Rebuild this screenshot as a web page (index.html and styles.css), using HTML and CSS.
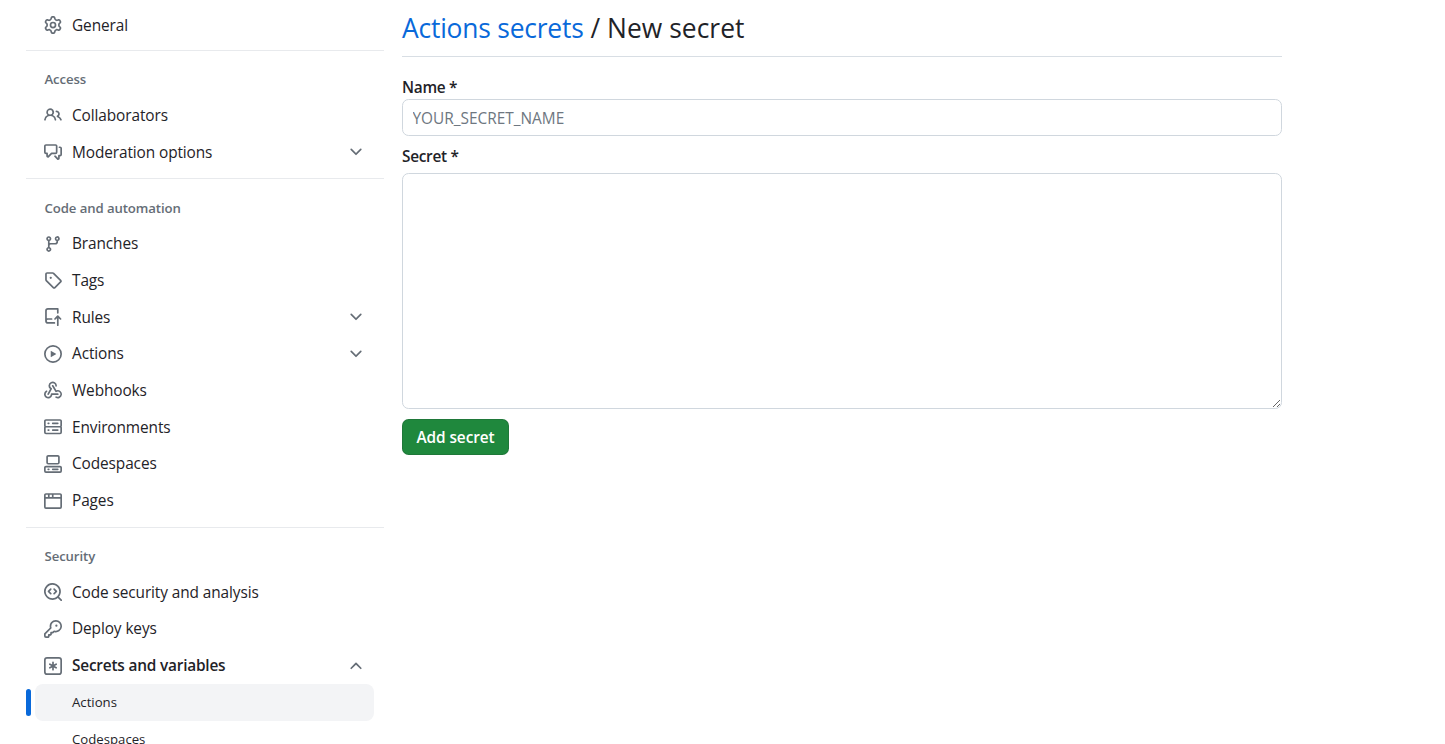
FILE: index.html
```html
<!DOCTYPE html>
<html lang="en">
<head>
  <meta charset="UTF-8" />
  <meta name="viewport" content="width=device-width, initial-scale=1.0" />
  <title>Add secret</title>
  <link rel="stylesheet" href="styles.css">
</head>
<body>
  <div class="layout">
    <nav class="sidebar">
      <a class="item"><svg class="icon" viewBox="0 0 16 16"><path d="M8 0a8.2 8.2 0 0 1 .701.031C9.444.095 9.99.645 10.16 1.29l.288 1.107c.018.066.079.158.212.224.231.114.454.243.668.386.123.082.233.09.299.071l1.103-.303c.644-.176 1.392.021 1.82.63.27.385.506.792.704 1.218.315.675.111 1.422-.364 1.891l-.814.806c-.049.048-.098.147-.088.294.016.257.016.515 0 .772-.01.147.038.246.088.294l.814.806c.475.469.679 1.216.364 1.891a7.977 7.977 0 0 1-.704 1.217c-.428.61-1.176.807-1.82.63l-1.102-.302c-.067-.019-.177-.011-.3.071a5.909 5.909 0 0 1-.668.386c-.133.066-.194.158-.211.224l-.29 1.106c-.168.646-.715 1.196-1.458 1.26a8.006 8.006 0 0 1-1.402 0c-.743-.064-1.289-.614-1.458-1.26l-.289-1.106c-.018-.066-.079-.158-.212-.224a5.738 5.738 0 0 1-.668-.386c-.123-.082-.233-.09-.299-.071l-1.103.303c-.644.176-1.392-.021-1.82-.63a8.12 8.12 0 0 1-.704-1.218c-.315-.675-.111-1.422.363-1.891l.815-.806c.05-.048.098-.147.088-.294a6.214 6.214 0 0 1 0-.772c.01-.147-.038-.246-.088-.294l-.815-.806C.635 6.045.431 5.298.746 4.623a7.92 7.92 0 0 1 .704-1.217c.428-.61 1.176-.807 1.82-.63l1.102.302c.067.019.177.011.3-.071.214-.143.437-.272.668-.386.133-.066.194-.158.211-.224l.29-1.106C6.009.645 6.556.095 7.299.03 7.53.01 7.764 0 8 0Zm-.571 1.525c-.036.003-.108.036-.137.146l-.289 1.105c-.147.561-.549.967-.998 1.189-.173.086-.34.183-.5.29-.417.278-.97.423-1.529.27l-1.103-.303c-.109-.03-.175.016-.195.045-.22.312-.412.644-.573.99-.014.031-.021.11.059.19l.815.806c.411.406.562.957.53 1.456a4.709 4.709 0 0 0 0 .582c.032.499-.119 1.05-.53 1.456l-.815.806c-.081.08-.073.159-.059.19.162.346.353.677.573.989.02.03.085.076.195.046l1.102-.303c.56-.153 1.113-.008 1.53.27.161.107.328.204.501.29.447.222.85.629.997 1.189l.289 1.105c.029.109.101.143.137.146a6.6 6.6 0 0 0 1.142 0c.036-.003.108-.036.137-.146l.289-1.105c.147-.561.549-.967.998-1.189.173-.086.34-.183.5-.29.417-.278.97-.423 1.529-.27l1.103.303c.109.029.175-.016.195-.045.22-.313.411-.644.573-.99.014-.031.021-.11-.059-.19l-.815-.806c-.411-.406-.562-.957-.53-1.456a4.709 4.709 0 0 0 0-.582c-.032-.499.119-1.05.53-1.456l.815-.806c.081-.08.073-.159.059-.19a6.464 6.464 0 0 0-.573-.989c-.02-.03-.085-.076-.195-.046l-1.102.303c-.56.153-1.113.008-1.53-.27a4.44 4.44 0 0 0-.501-.29c-.447-.222-.85-.629-.997-1.189l-.289-1.105c-.029-.11-.101-.143-.137-.146a6.6 6.6 0 0 0-1.142 0ZM11 8a3 3 0 1 1-6 0 3 3 0 0 1 6 0ZM9.5 8a1.5 1.5 0 1 0-3.001.001A1.5 1.5 0 0 0 9.5 8Z"/></svg>General</a>

      <div class="divider divider-first"></div>
      <h2 class="heading">Access</h2>
      <a class="item"><svg class="icon" viewBox="0 0 16 16"><path d="M2 5.5a3.5 3.5 0 1 1 5.898 2.549 5.508 5.508 0 0 1 3.034 4.084.75.75 0 1 1-1.482.235 4 4 0 0 0-7.9 0 .75.75 0 0 1-1.482-.236A5.507 5.507 0 0 1 3.102 8.05 3.493 3.493 0 0 1 2 5.5ZM11 4a3.001 3.001 0 0 1 2.22 5.018 5.01 5.01 0 0 1 2.56 3.012.749.749 0 0 1-.885.954.752.752 0 0 1-.549-.514 3.507 3.507 0 0 0-2.522-2.372.75.75 0 0 1-.574-.73v-.352a.75.75 0 0 1 .416-.672A1.5 1.5 0 0 0 11 5.5.75.75 0 0 1 11 4Zm-5.5-.5a2 2 0 1 0-.001 3.999A2 2 0 0 0 5.5 3.5Z"/></svg>Collaborators</a>
      <a class="item"><svg class="icon" viewBox="0 0 16 16"><path d="M1.75 1h8.5c.966 0 1.75.784 1.75 1.75v5.5A1.75 1.75 0 0 1 10.25 10H7.061l-2.574 2.573A1.458 1.458 0 0 1 2 11.543V10h-.25A1.75 1.75 0 0 1 0 8.25v-5.5C0 1.784.784 1 1.75 1ZM1.5 2.75v5.5c0 .138.112.25.25.25h1a.75.75 0 0 1 .75.75v2.19l2.72-2.72a.749.749 0 0 1 .53-.22h3.5a.25.25 0 0 0 .25-.25v-5.5a.25.25 0 0 0-.25-.25h-8.5a.25.25 0 0 0-.25.25Zm13 2a.25.25 0 0 0-.25-.25h-.5a.75.75 0 0 1 0-1.5h.5c.966 0 1.75.784 1.75 1.75v5.5A1.75 1.75 0 0 1 14.25 12H14v1.543a1.458 1.458 0 0 1-2.487 1.03L9.22 12.28a.749.749 0 0 1 .326-1.275.749.749 0 0 1 .734.215l2.22 2.22v-2.19a.75.75 0 0 1 .75-.75h1a.25.25 0 0 0 .25-.25Z"/></svg>Moderation options<svg class="chevron" viewBox="0 0 16 16"><path d="M12.78 5.22a.749.749 0 0 1 0 1.06l-4.25 4.25a.749.749 0 0 1-1.06 0L3.22 6.28a.749.749 0 1 1 1.06-1.06L8 8.939l3.72-3.719a.749.749 0 0 1 1.06 0Z"/></svg></a>

      <div class="divider"></div>
      <h2 class="heading">Code and automation</h2>
      <a class="item"><svg class="icon" viewBox="0 0 16 16"><path d="M9.5 3.25a2.25 2.25 0 1 1 3 2.122V6A2.5 2.5 0 0 1 10 8.5H6a1 1 0 0 0-1 1v1.128a2.251 2.251 0 1 1-1.5 0V5.372a2.25 2.25 0 1 1 1.5 0v1.836A2.493 2.493 0 0 1 6 7h4a1 1 0 0 0 1-1v-.628A2.25 2.25 0 0 1 9.5 3.25Zm-6 0a.75.75 0 1 0 1.5 0 .75.75 0 0 0-1.5 0Zm8.25-.75a.75.75 0 1 0 0 1.5.75.75 0 0 0 0-1.5ZM4.25 12a.75.75 0 1 0 0 1.5.75.75 0 0 0 0-1.5Z"/></svg>Branches</a>
      <a class="item"><svg class="icon" viewBox="0 0 16 16"><path d="M1 7.775V2.75C1 1.784 1.784 1 2.75 1h5.025c.464 0 .91.184 1.238.513l6.25 6.25a1.75 1.75 0 0 1 0 2.474l-5.026 5.026a1.75 1.75 0 0 1-2.474 0l-6.25-6.25A1.752 1.752 0 0 1 1 7.775Zm1.5 0c0 .066.026.13.073.177l6.25 6.25a.25.25 0 0 0 .354 0l5.025-5.025a.25.25 0 0 0 0-.354l-6.25-6.25a.25.25 0 0 0-.177-.073H2.75a.25.25 0 0 0-.25.25ZM6 5a1 1 0 1 1 0 2 1 1 0 0 1 0-2Z"/></svg>Tags</a>
      <a class="item"><svg class="icon" viewBox="0 0 16 16"><path d="M1 2.5A2.5 2.5 0 0 1 3.5 0h8.75a.75.75 0 0 1 .75.75v3.5a.75.75 0 0 1-1.5 0V1.5h-8a1 1 0 0 0-1 1v6.708A2.493 2.493 0 0 1 3.5 9h3.25a.75.75 0 0 1 0 1.5H3.5a1 1 0 0 0 0 2h5.75a.75.75 0 0 1 0 1.5H3.5A2.5 2.5 0 0 1 1 11.5Zm13.23 7.79h-.001l-1.224-1.224v6.184a.75.75 0 0 1-1.5 0V9.066L10.28 10.29a.75.75 0 0 1-1.06-1.061l2.505-2.504a.75.75 0 0 1 1.06 0L15.29 9.23a.751.751 0 0 1-.018 1.042.751.751 0 0 1-1.042.018Z"/></svg>Rules<svg class="chevron" viewBox="0 0 16 16"><path d="M12.78 5.22a.749.749 0 0 1 0 1.06l-4.25 4.25a.749.749 0 0 1-1.06 0L3.22 6.28a.749.749 0 1 1 1.06-1.06L8 8.939l3.72-3.719a.749.749 0 0 1 1.06 0Z"/></svg></a>
      <a class="item"><svg class="icon" viewBox="0 0 16 16"><path d="M8 0a8 8 0 1 1 0 16A8 8 0 0 1 8 0ZM1.5 8a6.5 6.5 0 1 0 13 0 6.5 6.5 0 0 0-13 0Zm4.879-2.773 4.264 2.559a.25.25 0 0 1 0 .428l-4.264 2.559A.25.25 0 0 1 6 10.559V5.442a.25.25 0 0 1 .379-.215Z"/></svg>Actions<svg class="chevron" viewBox="0 0 16 16"><path d="M12.78 5.22a.749.749 0 0 1 0 1.06l-4.25 4.25a.749.749 0 0 1-1.06 0L3.22 6.28a.749.749 0 1 1 1.06-1.06L8 8.939l3.72-3.719a.749.749 0 0 1 1.06 0Z"/></svg></a>
      <a class="item"><svg class="icon" viewBox="0 0 16 16"><path d="M5.5 4.25a2.25 2.25 0 0 1 4.5 0 .75.75 0 0 0 1.5 0 3.75 3.75 0 1 0-6.14 2.889l-2.272 4.258a.75.75 0 0 0 1.324.706L7 7.25a.75.75 0 0 0-.309-1.015A2.25 2.25 0 0 1 5.5 4.25Z"/><path d="M7.364 3.607a.75.75 0 0 1 1.03.257l2.608 4.349a3.75 3.75 0 1 1-.628 6.785.75.75 0 0 1 .752-1.299 2.25 2.25 0 1 0-.033-3.88.75.75 0 0 1-1.03-.256L7.107 4.636a.75.75 0 0 1 .257-1.03Z"/><path d="M2.9 8.776A.75.75 0 0 1 2.625 9.8 2.25 2.25 0 1 0 6 11.75a.75.75 0 0 1 .75-.751h5.5a.75.75 0 0 1 0 1.5H7.425a3.751 3.751 0 1 1-5.55-3.998.75.75 0 0 1 1.024.274Z"/></svg>Webhooks</a>
      <a class="item"><svg class="icon" viewBox="0 0 16 16"><path d="M1.75 1h12.5c.966 0 1.75.784 1.75 1.75v4c0 .372-.116.717-.314 1 .198.283.314.628.314 1v4a1.75 1.75 0 0 1-1.75 1.75H1.75A1.75 1.75 0 0 1 0 12.75v-4c0-.358.109-.707.314-1a1.739 1.739 0 0 1-.314-1v-4C0 1.784.784 1 1.75 1ZM1.5 2.75v4c0 .138.112.25.25.25h12.5a.25.25 0 0 0 .25-.25v-4a.25.25 0 0 0-.25-.25H1.75a.25.25 0 0 0-.25.25Zm.25 5.75a.25.25 0 0 0-.25.25v4c0 .138.112.25.25.25h12.5a.25.25 0 0 0 .25-.25v-4a.25.25 0 0 0-.25-.25ZM7 4.75A.75.75 0 0 1 7.75 4h4.5a.75.75 0 0 1 0 1.5h-4.5A.75.75 0 0 1 7 4.75ZM7.75 10h4.5a.75.75 0 0 1 0 1.5h-4.5a.75.75 0 0 1 0-1.5ZM3 4.75A.75.75 0 0 1 3.75 4h.5a.75.75 0 0 1 0 1.5h-.5A.75.75 0 0 1 3 4.75ZM3.75 10h.5a.75.75 0 0 1 0 1.5h-.5a.75.75 0 0 1 0-1.5Z"/></svg>Environments</a>
      <a class="item"><svg class="icon" viewBox="0 0 16 16"><path d="M0 11.25c0-.966.784-1.75 1.75-1.75h12.5c.966 0 1.75.784 1.75 1.75v3A1.75 1.75 0 0 1 14.25 16H1.75A1.75 1.75 0 0 1 0 14.25Zm2-9.5C2 .784 2.784 0 3.75 0h8.5C13.216 0 14 .784 14 1.75v5a1.75 1.75 0 0 1-1.75 1.75h-8.5A1.75 1.75 0 0 1 2 6.75Zm1.75-.25a.25.25 0 0 0-.25.25v5c0 .138.112.25.25.25h8.5a.25.25 0 0 0 .25-.25v-5a.25.25 0 0 0-.25-.25Zm-2 9.5a.25.25 0 0 0-.25.25v3c0 .138.112.25.25.25h12.5a.25.25 0 0 0 .25-.25v-3a.25.25 0 0 0-.25-.25Z"/><path d="M7 12.75a.75.75 0 0 1 .75-.75h4.5a.75.75 0 0 1 0 1.5h-4.5a.75.75 0 0 1-.75-.75Zm-4 0a.75.75 0 0 1 .75-.75h.5a.75.75 0 0 1 0 1.5h-.5a.75.75 0 0 1-.75-.75Z"/></svg>Codespaces</a>
      <a class="item"><svg class="icon" viewBox="0 0 16 16"><path d="M0 2.75C0 1.784.784 1 1.75 1h12.5c.966 0 1.75.784 1.75 1.75v10.5A1.75 1.75 0 0 1 14.25 15H1.75A1.75 1.75 0 0 1 0 13.25ZM14.5 6h-13v7.25c0 .138.112.25.25.25h12.5a.25.25 0 0 0 .25-.25Zm-6-3.5v2h6v-1.75a.25.25 0 0 0-.25-.25ZM5 2.5v2h2v-2Zm-3.25 0a.25.25 0 0 0-.25.25V4.5h2v-2Z"/></svg>Pages</a>

      <div class="divider"></div>
      <h2 class="heading">Security</h2>
      <a class="item"><svg class="icon" viewBox="0 0 16 16"><path d="M8.47 4.97a.75.75 0 0 0 0 1.06L9.94 7.5 8.47 8.97a.75.75 0 1 0 1.06 1.06l2-2a.75.75 0 0 0 0-1.06l-2-2a.75.75 0 0 0-1.06 0ZM6.53 6.03a.75.75 0 0 0-1.06-1.06l-2 2a.75.75 0 0 0 0 1.06l2 2a.75.75 0 1 0 1.06-1.06L5.06 7.5l1.47-1.47Z"/><path d="M12.246 13.307a7.501 7.501 0 1 1 1.06-1.06l2.474 2.473a.749.749 0 0 1-.326 1.275.749.749 0 0 1-.734-.215ZM1.5 7.5a6 6 0 1 0 12 0 6 6 0 0 0-12 0Z"/></svg>Code security and analysis</a>
      <a class="item"><svg class="icon" viewBox="0 0 16 16"><path d="M10.5 0a5.499 5.499 0 1 1-1.288 10.848l-.932.932a.749.749 0 0 1-.53.22H7v.75a.749.749 0 0 1-.22.53l-.5.5a.749.749 0 0 1-.53.22H5v.75a.749.749 0 0 1-.22.53l-.5.5a.749.749 0 0 1-.53.22h-2A1.75 1.75 0 0 1 0 14.25v-2c0-.199.079-.389.22-.53l4.932-4.932A5.5 5.5 0 0 1 10.5 0Zm-4 5.5c-.001.431.069.86.205 1.269a.75.75 0 0 1-.181.768L1.5 12.56v1.69c0 .138.112.25.25.25h1.69l.06-.06v-1.19a.75.75 0 0 1 .75-.75h1.19l.06-.06v-1.19a.75.75 0 0 1 .75-.75h1.19l1.023-1.025a.75.75 0 0 1 .768-.18A4 4 0 1 0 6.5 5.5ZM11 6a1 1 0 1 1 0-2 1 1 0 0 1 0 2Z"/></svg>Deploy keys</a>
      <a class="item item-open"><svg class="icon" viewBox="0 0 16 16"><path d="M0 2.75A2.75 2.75 0 0 1 2.75 0h10.5A2.75 2.75 0 0 1 16 2.75v10.5A2.75 2.75 0 0 1 13.25 16H2.75A2.75 2.75 0 0 1 0 13.25ZM2.75 1.5c-.69 0-1.25.56-1.25 1.25v10.5c0 .69.56 1.25 1.25 1.25h10.5c.69 0 1.25-.56 1.25-1.25V2.75c0-.69-.56-1.25-1.25-1.25Z"/><path d="M8 4a.75.75 0 0 1 .75.75V6.7l1.69-.975a.75.75 0 0 1 .75 1.3L9.5 8l1.69.976a.75.75 0 0 1-.75 1.298L8.75 9.299V11.25a.75.75 0 0 1-1.5 0V9.299l-1.69.975a.75.75 0 0 1-.75-1.298L6.5 8l-1.69-.975a.75.75 0 0 1 .75-1.3l1.69.976V4.75A.75.75 0 0 1 8 4Z"/></svg>Secrets and variables<svg class="chevron" viewBox="0 0 16 16"><path d="M3.22 10.53a.749.749 0 0 1 0-1.06l4.25-4.25a.749.749 0 0 1 1.06 0l4.25 4.25a.749.749 0 1 1-1.06 1.06L8 6.811 4.28 10.53a.749.749 0 0 1-1.06 0Z"/></svg></a>
      <a class="subitem subitem-active">Actions</a>
      <a class="subitem">Codespaces</a>
    </nav>

    <main class="content">
      <h1 class="title"><a class="title-link">Actions secrets</a> / New secret</h1>
      <form class="secret-form">
        <label for="secretName">Name *</label>
        <input type="text" id="secretName" placeholder="YOUR_SECRET_NAME" />
        <label for="secretValue">Secret *</label>
        <textarea id="secretValue"></textarea>
        <button type="button">Add secret</button>
      </form>
    </main>
  </div>
</body>
</html>
```

FILE: styles.css
```css
html, body {
  margin: 0;
  height: 744px;
  overflow: hidden;
}

body {
  background-color: #fff;
  color: #1f2328;
  font-family: 'Open Sans', 'Noto Sans', sans-serif;
  font-size: 15.4px;
}

.layout {
  display: flex;
  gap: 18px;
  padding-left: 26px;
}

.sidebar {
  width: 358px;
  flex-shrink: 0;
  padding-top: 7.8px;
}

.item {
  display: flex;
  align-items: center;
  height: 35.2px;
  margin: 0 10px 1.5px 9px;
  padding: 0 9px 0 9px;
  color: #1f2328;
  letter-spacing: -0.1px;
}

.item-open {
  font-weight: 600;
  margin-bottom: 1px;
  letter-spacing: -0.2px;
}

.icon {
  width: 18px;
  height: 18px;
  margin-right: 10px;
  fill: #656d76;
  flex-shrink: 0;
}

.chevron {
  width: 18px;
  height: 18px;
  margin-left: auto;
  fill: #656d76;
}

.divider {
  height: 1px;
  background-color: #e8eaed;
  margin-top: 8.5px;
}

.divider-first {
  margin-top: 7px;
}

.heading {
  margin: 0;
  padding: 19.5px 0 9.4px 18.5px;
  font-size: 13.2px;
  font-weight: 600;
  line-height: 18px;
  color: #656d76;
  letter-spacing: -0.1px;
}

.subitem {
  position: relative;
  display: flex;
  align-items: center;
  height: 36.7px;
  margin: 0 10px 0 9px;
  padding-left: 37px;
  font-size: 13.2px;
  border-radius: 8px;
}

.subitem-active {
  background-color: #f3f4f6;
}

.subitem-active::before {
  content: "";
  position: absolute;
  left: -9px;
  top: 5px;
  width: 5px;
  height: 27px;
  border-radius: 3px;
  background-color: #0969da;
}

.content {
  width: 880px;
}

.title {
  margin: 0;
  padding: 9px 0 8px;
  font-size: 26.4px;
  font-weight: 400;
  line-height: 39px;
  letter-spacing: 0.04px;
  border-bottom: 1px solid #d8dee4;
}

.title-link {
  color: #0969da;
  letter-spacing: -0.2px;
}

.secret-form label {
  display: block;
  font-weight: 600;
  line-height: 22px;
  letter-spacing: -0.3px;
  margin-top: 20px;
}

.secret-form label[for="secretValue"] {
  margin-top: 10px;
  margin-bottom: 5px;
}

input[type="text"],
textarea {
  display: block;
  width: 100%;
  box-sizing: border-box;
  border: 1px solid #d0d7de;
  border-radius: 6.6px;
  padding: 0 9.5px;
  font-family: inherit;
  font-size: 15.4px;
  color: #1f2328;
  background-color: #fff;
}

input[type="text"] {
  height: 37px;
  padding-top: 1px;
}

input::placeholder {
  color: #6e7781;
  opacity: 1;
}

textarea {
  height: 236px;
}

button {
  display: block;
  width: 107px;
  height: 36px;
  margin-top: 10px;
  padding: 0;
  background-color: #1f883d;
  color: #fff;
  font-family: inherit;
  font-size: 15.4px;
  font-weight: 600;
  letter-spacing: -0.1px;
  border: 1px solid rgba(31, 35, 40, 0.15);
  border-radius: 6.6px;
  cursor: pointer;
}
```
